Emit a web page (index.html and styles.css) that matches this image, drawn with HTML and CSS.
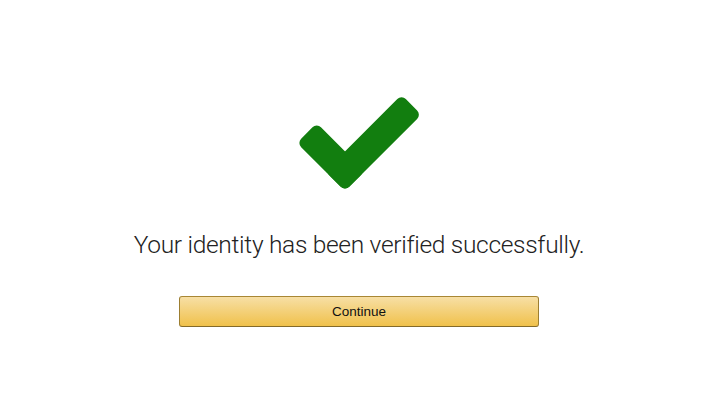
FILE: index.html
```html
<!DOCTYPE html>
<html>
<head>
<meta charset="utf-8">
<link rel="stylesheet" href="styles.css">
</head>
<body>
<main class="page">
  <svg class="check" width="140" height="105" viewBox="0 0 140 105" aria-hidden="true">
    <g transform="translate(56,101) rotate(45)" fill="#127e0f">
      <rect x="-28" y="-108" width="28" height="108" rx="6"/>
      <rect x="-68" y="-28" width="68" height="28" rx="6"/>
    </g>
  </svg>
  <h1 class="message">Your identity has been verified successfully.</h1>
  <button class="continue" type="button">Continue</button>
</main>
</body>
</html>
```
FILE: styles.css
```css
html, body {
  margin: 0;
  padding: 0;
  background: #ffffff;
}
.page {
  width: 718px;
  display: flex;
  flex-direction: column;
  align-items: center;
  padding-top: 90px;
}
.check {
  display: block;
}
.message {
  margin: 34.5px 0 0;
  font-family: Roboto, "Liberation Sans", Arial, sans-serif;
  font-weight: 300;
  font-size: 24.5px;
  letter-spacing: -0.3px;
  line-height: 30px;
  color: #222222;
}
.continue {
  margin-top: 36.5px;
  width: 360px;
  height: 31px;
  box-sizing: border-box;
  border: 1px solid;
  border-color: #a88734 #9c7e31 #846a29;
  border-radius: 3px;
  background: linear-gradient(to bottom, #f7dfa5, #f0c14b);
  font-family: "Liberation Sans", Arial, sans-serif;
  font-size: 13.5px;
  color: #111111;
  padding: 0;
}
```
